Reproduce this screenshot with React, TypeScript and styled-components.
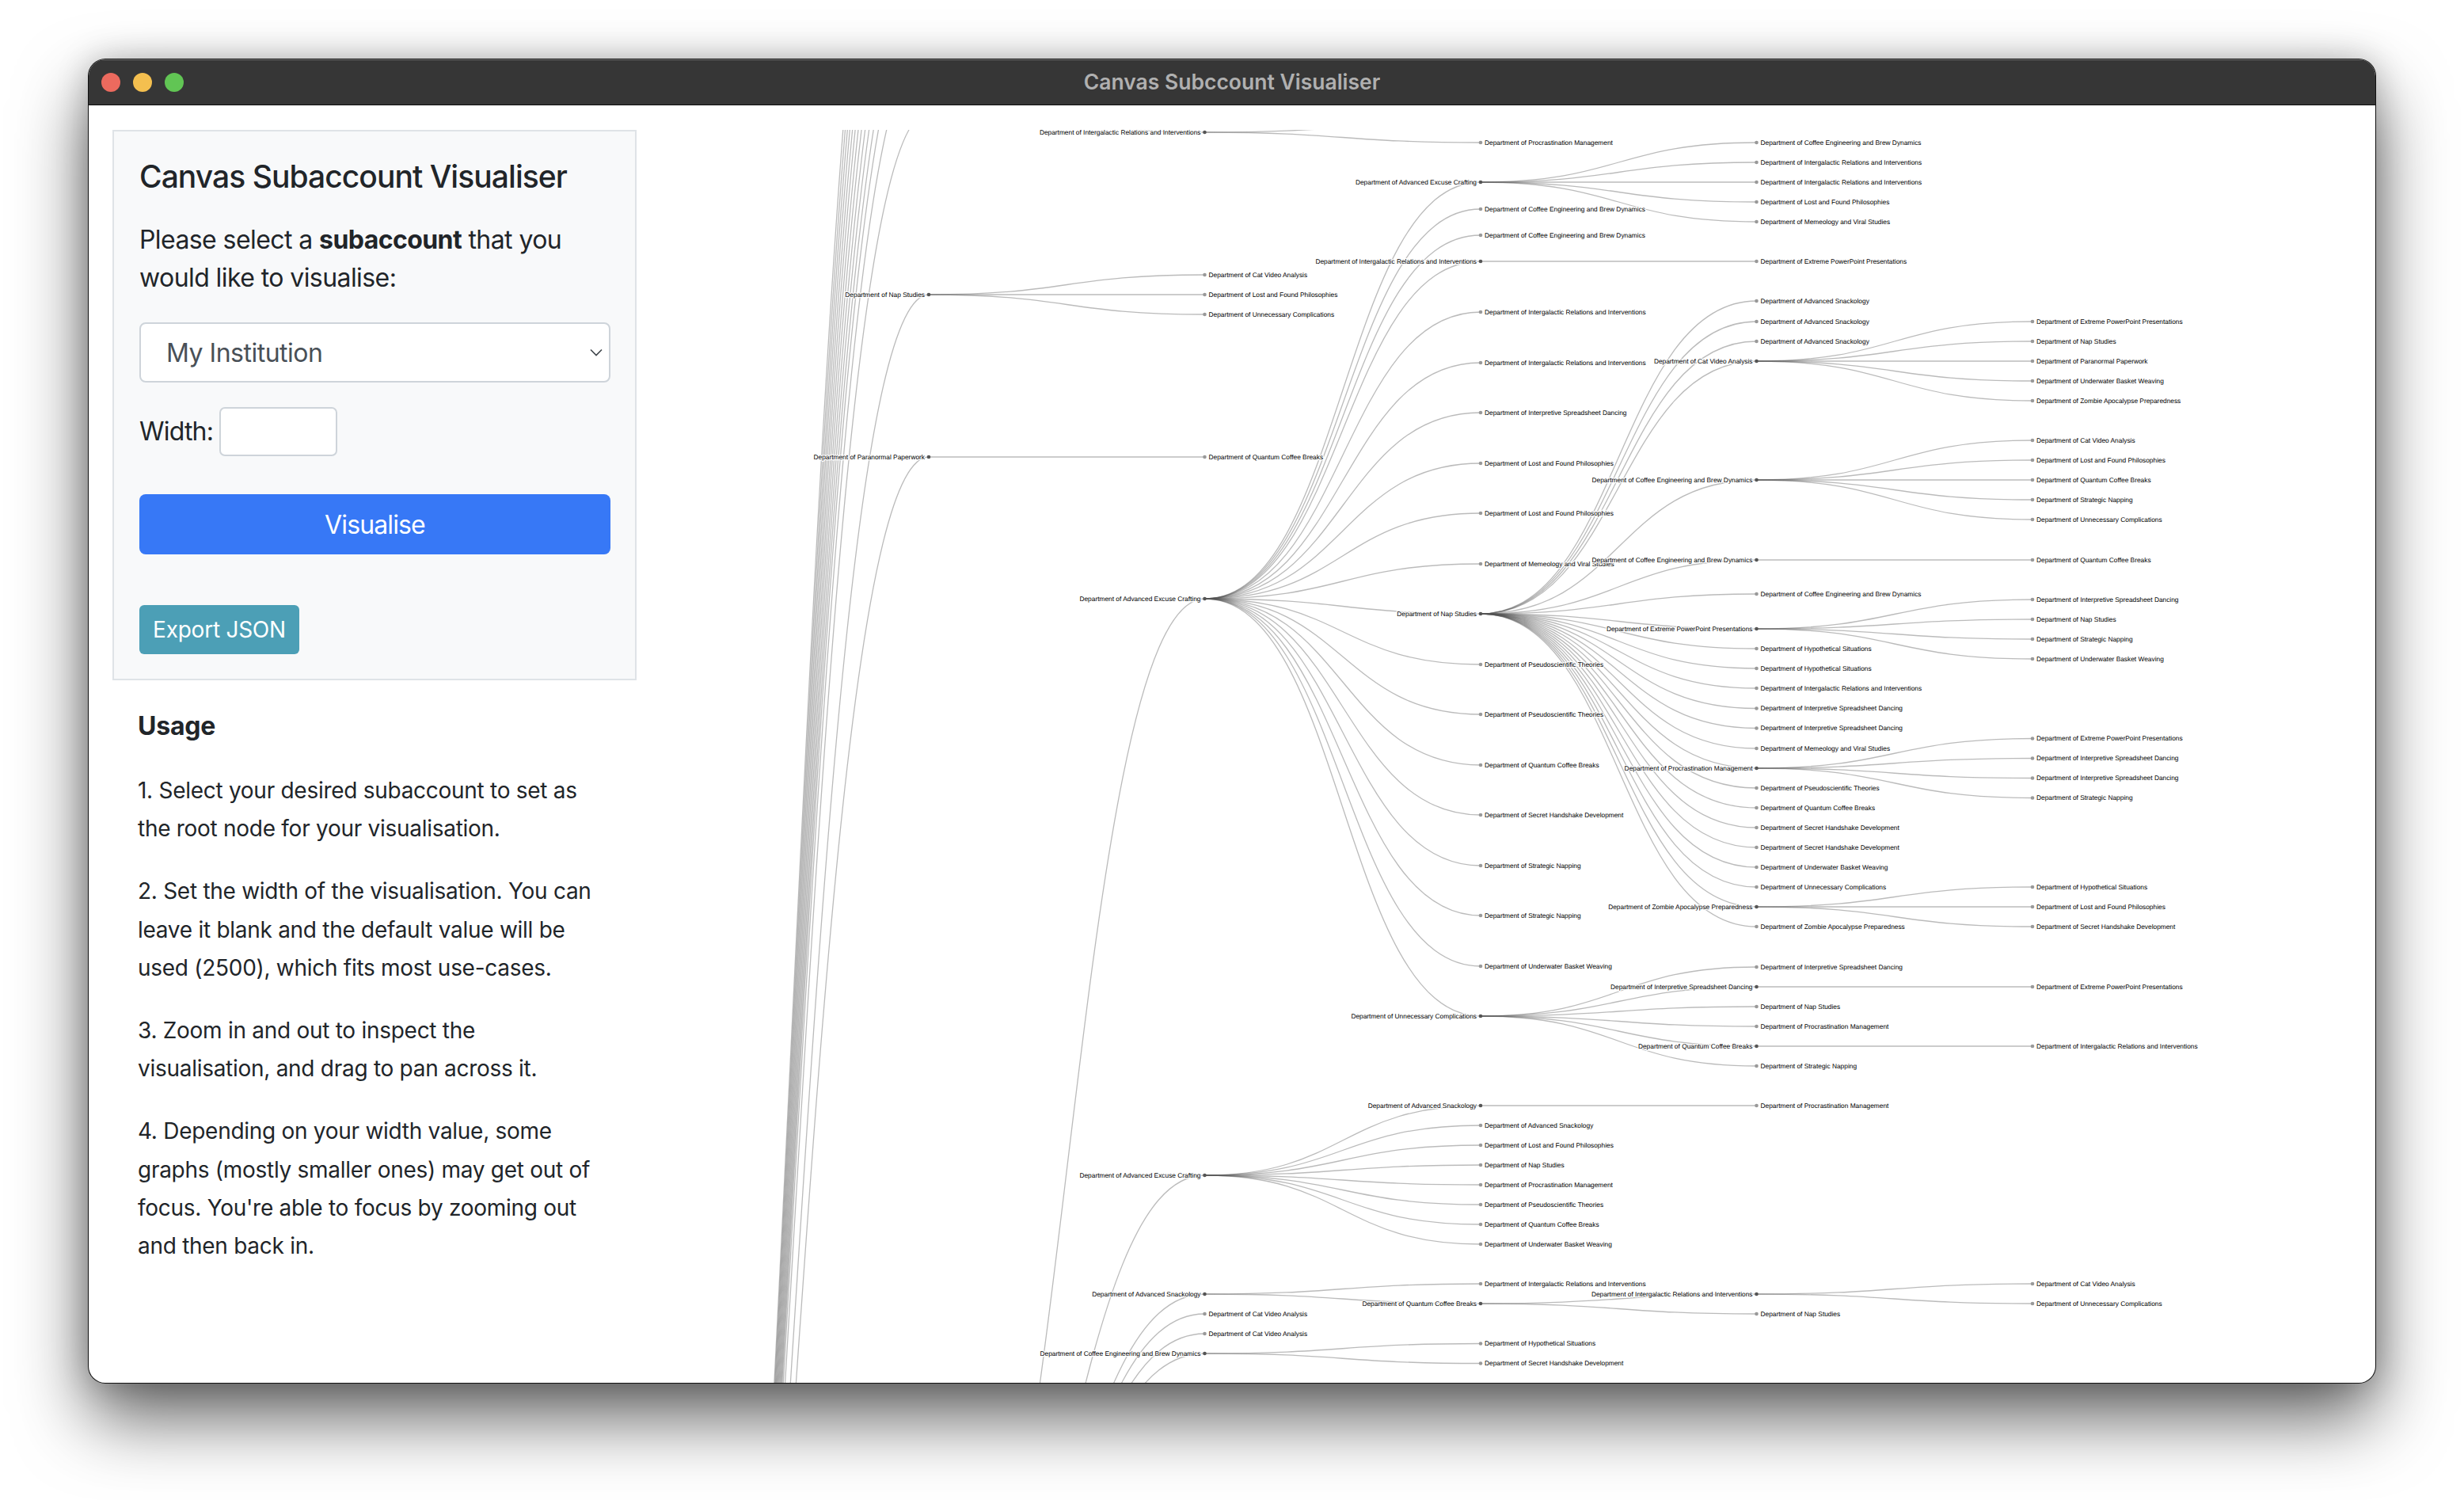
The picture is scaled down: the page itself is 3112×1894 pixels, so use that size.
import React from "react";
import styled, { createGlobalStyle } from "styled-components";

const Global = createGlobalStyle`
  html, body { margin: 0; padding: 0; background: #fff; }
  body { font-family: Inter, "Liberation Sans", sans-serif; color: #212529; }
`;

const Page = styled.div`
  width: 3112px;
  height: 1894px;
  padding: 75px 112px 148px 112px;
  box-sizing: border-box;
  overflow: hidden;
`;
const Win = styled.div`
  height: 100%;
  display: flex;
  flex-direction: column;
  background: #fff;
  border-radius: 21px;
  overflow: hidden;
  box-shadow: 0 0 0 1px #111, 0 44px 90px rgba(0,0,0,.62), 0 0 40px rgba(0,0,0,.22);
`;
const TitleBar = styled.header`
  flex: none;
  height: 58px;
  box-sizing: border-box;
  display: grid;
  grid-template-columns: 1fr auto 1fr;
  align-items: center;
  padding: 0 16px;
  background: #363636;
  border-top: 1px solid #777;
  border-bottom: 1px solid #0c0c0c;
`;
const Lights = styled.div`
  display: flex;
  gap: 16px;
`;
const Light = styled.span<{ $c: string }>`
  width: 24px;
  height: 24px;
  border-radius: 50%;
  background: ${(p) => p.$c};
`;
const WinTitle = styled.div`
  font-size: 26.5px;
  font-weight: 600;
  line-height: 30px;
  margin-top: -2px;
  color: #b0b0b0;
`;
const Body = styled.div`
  flex: 1;
  min-height: 0;
  display: flex;
`;
const Side = styled.aside`
  flex: none;
  width: 720px;
  box-sizing: border-box;
  padding: 31px 0 0 30px;
`;
const Panel = styled.section`
  width: 662px;
  height: 695px;
  box-sizing: border-box;
  border: 2px solid #dfe3e7;
  background: #f8f9fa;
  padding: 29px 33px 0 32px;
`;
const Heading = styled.h1`
  margin: 0 0 28px;
  font-size: 39px;
  line-height: 56px;
  font-weight: 500;
  letter-spacing: -0.95px;
`;
const Lead = styled.p`
  margin: 0 0 32px;
  font-size: 32px;
  line-height: 48px;
  letter-spacing: -0.58px;
  b { font-weight: 700; }
`;
const SelectWrap = styled.div`
  position: relative;
  width: 595px;
  height: 76px;
`;
const Select = styled.select`
  appearance: none;
  width: 100%;
  height: 100%;
  box-sizing: border-box;
  border: 2px solid #ced4da;
  border-radius: 8px;
  background: #fff;
  padding: 0 32px;
  font: 400 32px Inter, sans-serif;
  letter-spacing: -0.5px;
  color: #495057;
`;
const Chevron = styled.svg`
  position: absolute;
  right: 9px;
  top: 32px;
  width: 18px;
  height: 12px;
`;
const WidthRow = styled.div`
  display: flex;
  align-items: center;
  gap: 8px;
  margin-top: 31px;
`;
const WidthLabel = styled.label`
  font-size: 32px;
  line-height: 48px;
  letter-spacing: -0.8px;
`;
const WidthInput = styled.input`
  width: 149px;
  height: 62px;
  box-sizing: border-box;
  border: 2px solid #ced4da;
  border-radius: 7px;
  background: #fff;
  padding: 0;
`;
const Primary = styled.button`
  display: block;
  width: 595px;
  height: 76px;
  margin-top: 48px;
  border: 0;
  border-radius: 8px;
  background: #3778f6;
  color: #fff;
  font: 400 32px Inter, sans-serif;
  letter-spacing: -0.87px;
`;
const Secondary = styled.button`
  display: block;
  width: 202px;
  height: 62px;
  margin-top: 64px;
  border: 0;
  border-radius: 6px;
  background: #4c9fb6;
  color: #fff;
  padding: 0;
  font: 400 28px Inter, sans-serif;
  letter-spacing: -0.25px;
`;
const Usage = styled.div`
  padding: 34px 0 0 32px;
`;
const UsageTitle = styled.h2`
  margin: 0 0 33px;
  font-size: 32px;
  line-height: 48px;
  font-weight: 700;
  letter-spacing: -0.2px;
`;
const Step = styled.p`
  margin: 0 0 31px;
  font-size: 28px;
  line-height: 48.2px;
  font-weight: 400;
  letter-spacing: -0.28px;
  white-space: nowrap;
`;
const GraphPane = styled.div`
  flex: 1;
  min-width: 0;
  padding-top: 31px;
  overflow: hidden;
`;
const Graph = styled.svg`
  display: block;
  width: 100%;
  height: 100%;
`;
const Link = styled.path`
  fill: none;
  stroke: #555;
  stroke-opacity: 0.4;
  stroke-width: 1.3;
`;
const Dot = styled.circle<{ $branch: boolean }>`
  fill: ${(p) => (p.$branch ? "#555" : "#999")};
`;
const Label = styled.text`
  font-family: "Liberation Sans", Arial, sans-serif;
  font-size: 8.35px;
  fill: #000;
  stroke: #fff;
  stroke-width: 2.4px;
  stroke-linejoin: round;
  paint-order: stroke;
  text-rendering: geometricPrecision;
`;

type N = { n: string; y: number; k?: N[] };
const t = (n: string, y: number, k?: N[]): N => ({ n, y, k });

const IR = "Intergalactic Relations and Interventions";
const CE = "Coffee Engineering and Brew Dynamics";
const LF = "Lost and Found Philosophies";
const UC = "Unnecessary Complications";
const QC = "Quantum Coffee Breaks";
const PM = "Procrastination Management";
const AS = "Advanced Snackology";
const AE = "Advanced Excuse Crafting";
const CV = "Cat Video Analysis";
const NS = "Nap Studies";
const EP = "Extreme PowerPoint Presentations";
const IS = "Interpretive Spreadsheet Dancing";
const MV = "Memeology and Viral Studies";
const PT = "Pseudoscientific Theories";
const SH = "Secret Handshake Development";
const SN = "Strategic Napping";
const UB = "Underwater Basket Weaving";
const HS = "Hypothetical Situations";
const ZA = "Zombie Apocalypse Preparedness";
const PP = "Paranormal Paperwork";

const forest: N[] = [
  t("", 142, [t(IR, 167, [t("", 155), t(PM, 180)])]),
  t(NS, 372, [t(CV, 347), t(LF, 372), t(UC, 397)]),
  t(PP, 577, [t(QC, 577)]),
  t("", 2200, [
    t(AE, 756, [
      t(AE, 230, [t(CE, 180), t(IR, 205), t(IR, 230), t(LF, 255), t(MV, 280)]),
      t(CE, 264),
      t(CE, 297),
      t(IR, 330, [t(EP, 330)]),
      t(IR, 394),
      t(IR, 458),
      t(IS, 521),
      t(LF, 585),
      t(LF, 648),
      t(MV, 712),
      t(NS, 775, [
        t(AS, 380),
        t(AS, 406),
        t(AS, 431),
        t(CV, 456, [t(EP, 406), t(NS, 431), t(PP, 456), t(UB, 481), t(ZA, 506)]),
        t(CE, 606, [t(CV, 556), t(LF, 581), t(QC, 606), t(SN, 631), t(UC, 656)]),
        t(CE, 707, [t(QC, 707)]),
        t(CE, 750),
        t(EP, 794, [t(IS, 757), t(NS, 782), t(SN, 807), t(UB, 832)]),
        t(HS, 819),
        t(HS, 844),
        t(IR, 869),
        t(IS, 894.5),
        t(IS, 919.5),
        t(MV, 945),
        t(PM, 970, [t(EP, 932.5), t(IS, 957.5), t(IS, 982.5), t(SN, 1007.5)]),
        t(PT, 995),
        t(QC, 1020),
        t(SH, 1045),
        t(SH, 1070),
        t(UB, 1095),
        t(UC, 1120),
        t(ZA, 1145, [t(HS, 1120), t(LF, 1145), t(SH, 1170)]),
        t(ZA, 1170),
      ]),
      t(PT, 839),
      t(PT, 902),
      t(QC, 966),
      t(SH, 1029),
      t(SN, 1093),
      t(SN, 1156),
      t(UB, 1220),
      t(UC, 1283, [
        t(IS, 1221),
        t(IS, 1246, [t(EP, 1246)]),
        t(NS, 1271),
        t(PM, 1296),
        t(QC, 1321, [t(IR, 1321)]),
        t(SN, 1346),
      ]),
    ]),
    t(AE, 1484, [
      t(AS, 1396, [t(PM, 1396)]),
      t(AS, 1421),
      t(LF, 1446),
      t(NS, 1471),
      t(PM, 1496),
      t(PT, 1521),
      t(QC, 1546),
      t(UB, 1571),
    ]),
    t(AS, 1634, [
      t(IR, 1621),
      t(QC, 1646, [t(IR, 1634, [t(CV, 1621), t(UC, 1646)]), t(NS, 1659)]),
    ]),
    t(CV, 1659),
    t(CV, 1684),
    t(CE, 1709, [t(HS, 1696.5), t(SH, 1721.5)]),
  ]),
];

const ROOT = { x: 825, y: 3100 };
const offscreenBranches = [54, 0, -40, -81, -122, -164, -205, -247, -288, -330, -371, -412, -454];
const colX = (c: number) => 1173 + (c - 1) * 348.5;
const curve = (x0: number, y0: number, x1: number, y1: number) => {
  const m = (x0 + x1) / 2;
  return `M${x0},${y0}C${m},${y0} ${m},${y1} ${x1},${y1}`;
};

type Flat = { x: number; y: number; name: string; branch: boolean };
const links: string[] = [];
const nodes: Flat[] = [];
const walk = (node: N, col: number) => {
  const x = colX(col);
  if (node.n) nodes.push({ x, y: node.y, name: node.n, branch: !!node.k });
  (node.k || []).forEach((c) => {
    links.push(curve(x, node.y, colX(col + 1), c.y));
    walk(c, col + 1);
  });
};
offscreenBranches.forEach((y) => links.push(curve(ROOT.x, ROOT.y, colX(1), y)));
forest.forEach((r) => {
  links.push(curve(ROOT.x, ROOT.y, colX(1), r.y));
  walk(r, 1);
});

export default function App() {
  return (
    <Page>
      <Global />
      <Win>
        <TitleBar>
          <Lights>
            <Light $c="#ec6a5e" />
            <Light $c="#f4bf4f" />
            <Light $c="#61c554" />
          </Lights>
          <WinTitle>Canvas Subccount Visualiser</WinTitle>
          <span />
        </TitleBar>
        <Body>
          <Side>
            <Panel>
              <Heading>Canvas Subaccount Visualiser</Heading>
              <Lead>
                Please select a <b>subaccount</b> that you would like to visualise:
              </Lead>
              <SelectWrap>
                <Select defaultValue="My Institution">
                  <option>My Institution</option>
                </Select>
                <Chevron viewBox="0 0 18 12">
                  <path d="M2 2.5 L9 9.5 L16 2.5" fill="none" stroke="#3f454b" strokeWidth="1.6" />
                </Chevron>
              </SelectWrap>
              <WidthRow>
                <WidthLabel>Width:</WidthLabel>
                <WidthInput />
              </WidthRow>
              <Primary>Visualise</Primary>
              <Secondary>Export JSON</Secondary>
            </Panel>
            <Usage>
              <UsageTitle>Usage</UsageTitle>
              <Step>
                1. Select your desired subaccount to set as
                <br />
                the root node for your visualisation.
              </Step>
              <Step>
                2. Set the width of the visualisation. You can
                <br />
                leave it blank and the default value will be
                <br />
                used (2500), which fits most use-cases.
              </Step>
              <Step>
                3. Zoom in and out to inspect the
                <br />
                visualisation, and drag to pan across it.
              </Step>
              <Step>
                4. Depending on your width value, some
                <br />
                graphs (mostly smaller ones) may get out of
                <br />
                focus. You're able to focus by zooming out
                <br />
                and then back in.
              </Step>
            </Usage>
          </Side>
          <GraphPane>
            <Graph viewBox="832 164 2168 1582" preserveAspectRatio="xMinYMin slice">
              <g>
                {links.map((d, i) => (
                  <Link key={i} d={d} />
                ))}
              </g>
              <g>
                {nodes.map((n, i) => (
                  <g key={i}>
                    <Dot cx={n.x} cy={n.y} r={2.3} $branch={n.branch} />
                    <Label
                      x={n.branch ? n.x - 5 : n.x + 5}
                      y={n.y}
                      dy="0.32em"
                      textAnchor={n.branch ? "end" : "start"}
                    >
                      Department of {n.name}
                    </Label>
                  </g>
                ))}
              </g>
            </Graph>
          </GraphPane>
        </Body>
      </Win>
    </Page>
  );
}
